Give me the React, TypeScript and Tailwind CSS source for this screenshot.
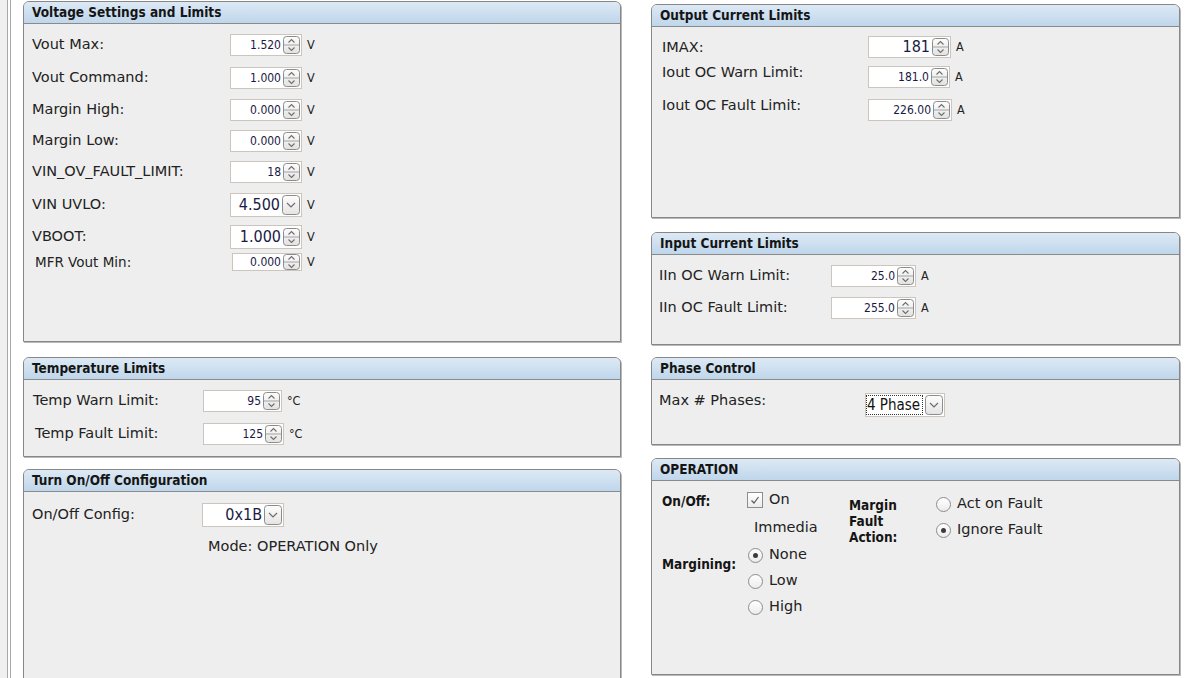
import { FC, ReactNode } from 'react';

const SANS = "font-['DejaVu_Sans_Condensed','DejaVu_Sans',sans-serif]";
const LABEL = "font-['DejaVu_Sans',sans-serif] text-[14.5px] text-[#222]";

// Spinner button (up/down arrows)
const Spin: FC<{ h?: number }> = ({ h = 18 }) => (
  <svg width="17" height={h} viewBox={`0 0 17 ${h}`} className="shrink-0">
    <defs>
      <linearGradient id="spg" x1="0" y1="0" x2="0" y2="1">
        <stop offset="0" stopColor="#fdfdfd" />
        <stop offset="1" stopColor="#e2e2e2" />
      </linearGradient>
    </defs>
    <rect x="0.5" y="0.5" width="16" height={h - 1} rx="3" fill="url(#spg)" stroke="#8c8c8c" />
    <line x1="1" y1={h / 2} x2="16" y2={h / 2} stroke="#a3a3a3" />
    <path d={`M5.5 ${h / 2 - 2.5} L8.5 ${h / 2 - 5.5} L11.5 ${h / 2 - 2.5}`} fill="none" stroke="#6e6e6e" strokeWidth="1.1" />
    <path d={`M5.5 ${h / 2 + 2.5} L8.5 ${h / 2 + 5.5} L11.5 ${h / 2 + 2.5}`} fill="none" stroke="#6e6e6e" strokeWidth="1.1" />
  </svg>
);

// Combo drop button
const Drop: FC = () => (
  <svg width="18" height="20" viewBox="0 0 18 20" className="shrink-0">
    <defs>
      <linearGradient id="dpg" x1="0" y1="0" x2="0" y2="1">
        <stop offset="0" stopColor="#fdfdfd" />
        <stop offset="1" stopColor="#e4e4e4" />
      </linearGradient>
    </defs>
    <rect x="0.5" y="0.5" width="17" height="19" rx="3" fill="url(#dpg)" stroke="#8c8c8c" />
    <path d="M5 8 L9 12 L13 8" fill="none" stroke="#6e6e6e" strokeWidth="1.2" />
  </svg>
);

type FieldProps = {
  value: string;
  w: number;
  h?: number;
  big?: boolean;
  drop?: boolean;
  unit?: string;
  focus?: boolean;
};

const Field: FC<FieldProps> = ({ value, w, h = 22, big, drop, unit, focus }) => (
  <div className="flex items-center">
    <div
      className="flex items-center justify-end border border-[#cbc5bd] bg-white pr-[1px]"
      style={{ width: w, height: h }}
    >
      {focus ? (
        <span className="mr-[2px] flex h-[20px] w-[58px] items-center whitespace-nowrap border border-dotted border-[#333] text-[15px] leading-none text-[#111]">
          {value}
        </span>
      ) : (
        <span
          className={`whitespace-nowrap pr-[2px] leading-none text-[#1a1a44] ${big ? 'text-[16px]' : 'text-[12px]'}`}
        >
          {value}
        </span>
      )}
      {drop ? <Drop /> : <Spin h={h <= 18 ? 16 : 18} />}
    </div>
    {unit && <span className="ml-[5px] text-[12.5px] text-[#222]">{unit}</span>}
  </div>
);

const Panel: FC<{ title: string; className: string; children?: ReactNode }> = ({ title, className, children }) => (
  <div
    className={`flex shrink-0 flex-col overflow-hidden rounded-t-[6px] border border-[#878787] bg-[#eeeeee] shadow-[1px_1px_0_#b9b9b9] ${className}`}
  >
    <div className="flex h-[22px] shrink-0 items-center border-b border-[#8a8a8a] bg-gradient-to-b from-[#dde9f5] to-[#bfd6eb] pl-[8px] text-[13.5px] font-bold text-[#151515]">
      {title}
    </div>
    <div className="flex flex-1 flex-col">{children}</div>
  </div>
);

const Row: FC<{ label: string; lw: number; className?: string; children: ReactNode; lcls?: string }> = ({
  label,
  lw,
  className = '',
  children,
  lcls = '',
}) => (
  <div className={`flex items-center ${className}`}>
    <span className={`shrink-0 whitespace-nowrap ${LABEL} ${lcls}`} style={{ width: lw }}>
      {label}
    </span>
    {children}
  </div>
);

const Radio: FC<{ on?: boolean; label: string; className?: string }> = ({ on, label, className = '' }) => (
  <div className={`flex items-center ${className}`}>
    <span className="flex h-[15px] w-[15px] items-center justify-center rounded-full border border-[#8d8d8d] bg-gradient-to-b from-white to-[#ececec]">
      {on && <span className="h-[5px] w-[5px] rounded-full bg-[#3c3c3c]" />}
    </span>
    <span className={`ml-[6px] ${LABEL}`}>{label}</span>
  </div>
);

export default function App() {
  return (
    <div className={`flex h-[678px] w-[1191px] overflow-hidden bg-white ${SANS}`}>
      {/* left frame edge */}
      <div className="h-full w-[8px] shrink-0 border-r border-[#a8a8a8] bg-[#f0f0f0]" />
      <div className="h-full w-[2px] shrink-0 bg-white" />
      <div className="h-full w-[1px] shrink-0 bg-[#a8a8a8]" />

      {/* left column */}
      <div className="ml-[12px] flex w-[598px] shrink-0 flex-col">
        <Panel title="Voltage Settings and Limits" className="mt-[1px] h-[341px]">
          <div className="flex flex-col pl-[8px]">
            <Row label="Vout Max:" lw={198} className="mt-[10px] h-[22px]">
              <Field value="1.520" w={72} unit="V" />
            </Row>
            <Row label="Vout Command:" lw={198} className="mt-[11px] h-[22px]">
              <Field value="1.000" w={72} unit="V" />
            </Row>
            <Row label="Margin High:" lw={198} className="mt-[10px] h-[22px]">
              <Field value="0.000" w={72} unit="V" />
            </Row>
            <Row label="Margin Low:" lw={198} className="mt-[9px] h-[22px]">
              <Field value="0.000" w={72} unit="V" />
            </Row>
            <Row label="VIN_OV_FAULT_LIMIT:" lw={198} className="mt-[9px] h-[22px]">
              <Field value="18" w={72} unit="V" />
            </Row>
            <Row label="VIN UVLO:" lw={198} className="mt-[10px] h-[24px]">
              <Field value="4.500" w={72} h={24} big drop unit="V" />
            </Row>
            <Row label="VBOOT:" lw={198} className="mt-[8px] h-[24px]">
              <Field value="1.000" w={72} h={24} big unit="V" />
            </Row>
            <Row label="MFR Vout Min:" lw={200} className="mt-[4px] h-[18px]" lcls="pl-[3px] !text-[13.5px]">
              <Field value="0.000" w={70} h={18} unit="V" />
            </Row>
          </div>
        </Panel>

        <Panel title="Temperature Limits" className="mt-[15px] h-[100px]">
          <div className="flex flex-col pl-[8px]">
            <Row label="Temp Warn Limit:" lw={171} className="mt-[10px] h-[22px]" lcls="pl-[1px]">
              <Field value="95" w={79} unit="°C" />
            </Row>
            <Row label="Temp Fault Limit:" lw={171} className="mt-[11px] h-[22px]" lcls="pl-[3px]">
              <Field value="125" w={81} unit="°C" />
            </Row>
          </div>
        </Panel>

        <Panel title="Turn On/Off Configuration" className="mt-[12px] h-[240px]">
          <div className="flex flex-col pl-[8px]">
            <Row label="On/Off Config:" lw={170} className="mt-[11px] h-[24px]">
              <Field value="0x1B" w={82} h={24} big drop />
            </Row>
            <div className={`mt-[9px] pl-[176px] ${LABEL}`}>Mode: OPERATION Only</div>
          </div>
        </Panel>
      </div>

      {/* right column */}
      <div className="ml-[30px] flex w-[529px] shrink-0 flex-col">
        <Panel title="Output Current Limits" className="mt-[4px] h-[214px]">
          <div className="flex flex-col pl-[10px]">
            <Row label="IMAX:" lw={206} className="mt-[9px] h-[22px]" lcls="self-start pt-[1px]">
              <Field value="181" w={83} big unit="A" />
            </Row>
            <Row label="Iout OC Warn Limit:" lw={206} className="mt-[8px] h-[22px]" lcls="self-start -mt-[4px]">
              <Field value="181.0" w={82} unit="A" />
            </Row>
            <Row label="Iout OC Fault Limit:" lw={206} className="mt-[11px] h-[22px]" lcls="self-start -mt-[4px]">
              <Field value="226.00" w={84} unit="A" />
            </Row>
          </div>
        </Panel>

        <Panel title="Input Current Limits" className="mt-[14px] h-[113px]">
          <div className="flex flex-col pl-[7px]">
            <Row label="IIn OC Warn Limit:" lw={172} className="mt-[10px] h-[22px]">
              <Field value="25.0" w={85} unit="A" />
            </Row>
            <Row label="IIn OC Fault Limit:" lw={172} className="mt-[10px] h-[22px]">
              <Field value="255.0" w={85} unit="A" />
            </Row>
          </div>
        </Panel>

        <Panel title="Phase Control" className="mt-[12px] h-[88px]">
          <div className="flex flex-col pl-[7px]">
            <Row label="Max # Phases:" lw={206} className="mt-[13px] h-[24px]" lcls="self-start -mt-[3px]">
              <Field value="4 Phase" w={80} h={24} drop focus />
            </Row>
          </div>
        </Panel>

        <Panel title="OPERATION" className="mt-[13px] h-[217px]">
          <div className="flex pl-[10px] pt-[10px]">
            {/* on/off + margining */}
            <div className="flex w-[187px] shrink-0 flex-col">
              <div className="flex h-[18px] items-center">
                <span className="w-[85px] self-start text-[13.5px] font-bold text-[#151515]">On/Off:</span>
                <span className="flex h-[16px] w-[16px] items-center justify-center border border-[#8d8d8d] bg-gradient-to-b from-white to-[#ececec]">
                  <svg width="12" height="12" viewBox="0 0 12 12">
                    <path d="M2.5 6.5 L5 9 L9.5 3" fill="none" stroke="#5a5a5a" strokeWidth="1.2" />
                  </svg>
                </span>
                <span className={`ml-[6px] ${LABEL}`}>On</span>
              </div>
              <div className={`mt-[9px] pl-[92px] leading-[18px] ${LABEL}`}>Immedia</div>
              <div className="mt-[10px] flex">
                <span className="mt-[8px] w-[86px] text-[13.5px] font-bold text-[#151515]">Margining:</span>
                <div className="flex flex-col">
                  <Radio on label="None" className="h-[18px]" />
                  <Radio label="Low" className="mt-[8px] h-[18px]" />
                  <Radio label="High" className="mt-[8px] h-[18px]" />
                </div>
              </div>
            </div>
            {/* margin fault action */}
            <div className="mt-[6px] w-[87px] shrink-0 text-[13.5px] font-bold leading-[16px] text-[#151515]">
              Margin
              <br />
              Fault
              <br />
              Action:
            </div>
            <div className="flex flex-col pt-[4px]">
              <Radio label="Act on Fault" className="h-[18px]" />
              <Radio on label="Ignore Fault" className="mt-[8px] h-[18px]" />
            </div>
          </div>
        </Panel>
      </div>
    </div>
  );
}
